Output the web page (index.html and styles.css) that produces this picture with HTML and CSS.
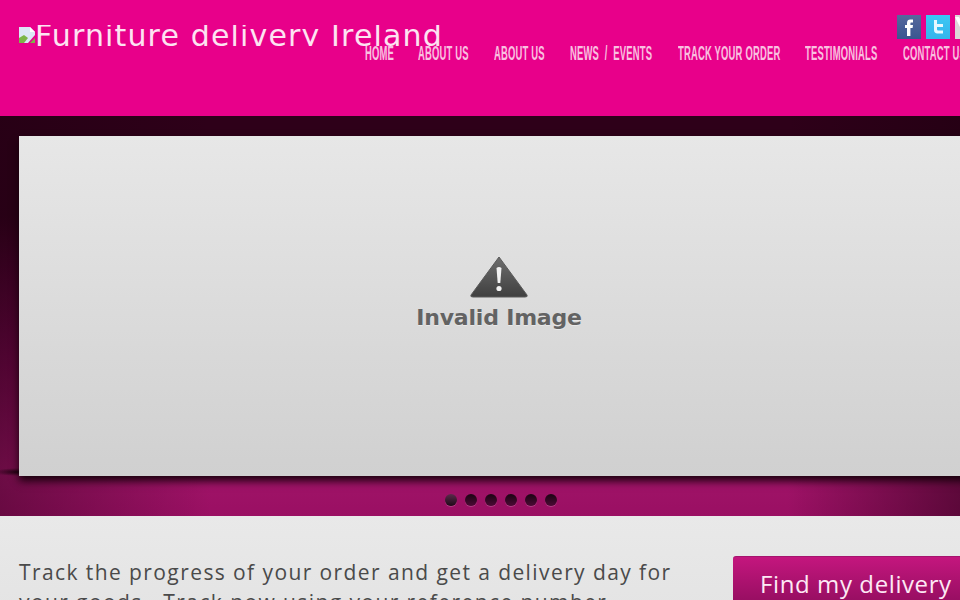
FILE: index.html
```html
<!DOCTYPE html>
<html lang="en">
<head>
  <meta charset="UTF-8">
  <title>Furniture delivery Ireland</title>
  <link rel="stylesheet" href="styles.css">
</head>
<body>
  <header class="header">
    <div class="logo">
      <div class="logo-inner">
        <svg class="broken-img" width="16" height="16" viewBox="0 0 16 16">
          <path d="M0 0h11l5 5v3L9 16H0z" fill="#dce6f6"/>
          <path d="M11 0l5 5h-5z" fill="#fff"/>
          <path d="M0 16v-5l5-3 4 3-4 5z" fill="#7cb548"/>
          <path d="M11 16l5-5v5z" fill="#7cb548"/>
        </svg>
        <span class="logo-text">Furniture delivery Ireland</span>
      </div>
    </div>
    <div class="header-right">
      <div class="social">
        <a class="social-icon fb" href="#">
          <svg width="24" height="24" viewBox="0 0 24 24"><path d="M10 21V13H8V10h2V8c0-2.500 1.300-3.500 3.300-3.500H16v3h-1.600c-.8 0-1 .4-1 1.100V10H16l-.4 3h-2.200v8z" fill="#fff"/></svg>
        </a>
        <a class="social-icon tw" href="#">
          <svg width="24" height="24" viewBox="0 0 24 24"><path d="M8 5h3v4h6v3h-6v2c0 1 .5 1.500 1.500 1.500H17v3h-5.500C9.200 18.500 8 17 8 15z" fill="#e6f8ff"/></svg>
        </a>
        <a class="social-icon yt" href="#">
          <svg width="24" height="24" viewBox="0 0 24 24"><path d="M0 2h4l4 8 4-8h4l-6 12v8H6v-8z" fill="#fff"/></svg>
        </a>
      </div>
      <nav class="nav">
        <a class="nav-link w-home" href="#"><span>HOME</span></a>
        <a class="nav-link w-about" href="#"><span>ABOUT US</span></a>
        <a class="nav-link w-about" href="#"><span>ABOUT US</span></a>
        <a class="nav-link w-news" href="#"><span>NEWS / EVENTS</span></a>
        <a class="nav-link w-track" href="#"><span>TRACK YOUR ORDER</span></a>
        <a class="nav-link w-test" href="#"><span>TESTIMONIALS</span></a>
        <a class="nav-link w-contact" href="#"><span>CONTACT US</span></a>
      </nav>
    </div>
  </header>

  <section class="hero">
    <div class="slide">
      <svg class="warn" width="58" height="42" viewBox="0 0 58 42">
        <defs>
          <linearGradient id="warnFill" x1="0" y1="0" x2="0" y2="1">
            <stop offset="0" stop-color="#6e6e6e"/>
            <stop offset="1" stop-color="#3f3f3f"/>
          </linearGradient>
        </defs>
        <path d="M29 1 L57 39 Q58 41 55 41 H3 Q0 41 1 39 Z" fill="url(#warnFill)" stroke="#5a5a5a" stroke-linejoin="round"/>
        <path d="M26.500 12 Q29 10 31.500 12 L30.300 27 H27.700 Z" fill="#f2f2f2"/>
        <circle cx="29" cy="32.500" r="2.600" fill="#f2f2f2"/>
      </svg>
      <div class="invalid">Invalid Image</div>
    </div>
    <div class="dots">
      <span class="dot active"></span>
      <span class="dot"></span>
      <span class="dot"></span>
      <span class="dot"></span>
      <span class="dot"></span>
      <span class="dot"></span>
    </div>
  </section>

  <section class="track">
    <p class="track-text">Track the progress of your order and get a delivery day for your goods.&nbsp; Track now using your reference number.</p>
    <a class="btn" href="#">Find my delivery</a>
  </section>
</body>
</html>
```

FILE: styles.css
```css
html, body {
  margin: 0;
  padding: 0;
  width: 960px;
  height: 600px;
  overflow: hidden;
}
body {
  background: #e6e6e6;
  font-family: "Open Sans", sans-serif;
}
a {
  text-decoration: none;
}

.header {
  display: flex;
  height: 116px;
  padding-left: 19px;
  background: #e8008a;
}
.logo {
  width: 346px;
  flex-shrink: 0;
}
.logo-inner {
  display: flex;
  align-items: flex-start;
  width: 430px;
  height: 21px;
  margin-top: 25px;
  overflow: hidden;
  color: #fde3f2;
  font-family: "DejaVu Sans", sans-serif;
  font-size: 30px;
  line-height: 21px;
  white-space: nowrap;
}
.broken-img {
  flex-shrink: 0;
  margin-top: 2px;
}
.logo-text {
  letter-spacing: 1.150px;
}
.header-right {
  width: 620px;
  flex-shrink: 0;
}
.social {
  display: flex;
  gap: 5px;
  padding: 15px 0 0 532px;
}
.social-icon {
  display: block;
  width: 24px;
  height: 24px;
  flex-shrink: 0;
}
.fb {
  background: linear-gradient(#56699c, #3a5590);
}
.tw {
  background: linear-gradient(#3bc8f4, #35b4ec);
}
.yt {
  background: #dcd6d8;
}
.nav {
  display: flex;
  gap: 25px;
  margin-top: 5px;
}
.nav-link {
  display: block;
  height: 18px;
  flex-shrink: 0;
  color: #f9c0e0;
  font-family: "Liberation Sans", sans-serif;
  font-size: 21px;
  font-weight: bold;
  letter-spacing: 0.4px;
  line-height: 18px;
  white-space: nowrap;
}
.nav-link span {
  display: inline-block;
  transform: scaleX(0.45);
  transform-origin: left center;
}
.w-home { width: 28px; }
.w-about { width: 51px; }
.w-news { width: 83px; word-spacing: 6.500px; }
.w-track { width: 102px; }
.w-test { width: 73px; }
.w-contact { width: 70px; }

.hero {
  height: 400px;
  box-sizing: border-box;
  padding: 20px 0 0 19px;
  background:
    radial-gradient(26px 4px at 19px 356px, rgba(20, 0, 10, 0.9), rgba(20, 0, 10, 0)),
    linear-gradient(90deg, rgba(30, 0, 16, 0.4) 0, rgba(30, 0, 16, 0) 22%, rgba(30, 0, 16, 0) 82%, rgba(30, 0, 16, 0.5) 100%),
    linear-gradient(#2e0019 0, #2e0019 25%, #6d0645 60%, #a01468 90%, #9a0f63 100%);
}
.slide {
  display: flex;
  flex-direction: column;
  align-items: center;
  width: 960px;
  height: 340px;
  box-sizing: border-box;
  padding-top: 120px;
  background: linear-gradient(#e7e7e7, #d0d0d0);
  box-shadow: 0 5px 8px rgba(20, 0, 10, 0.95);
}
.warn {
  display: block;
}
.invalid {
  margin-top: 5px;
  color: #636363;
  font-family: "DejaVu Sans", sans-serif;
  font-size: 22px;
  font-weight: bold;
  letter-spacing: -0.2px;
  line-height: 30px;
  text-shadow: 0 1px 0 #e8e8e8;
}
.dots {
  display: flex;
  gap: 8px;
  width: 964px;
  height: 40px;
  align-items: center;
  justify-content: center;
  padding-top: 8px;
  box-sizing: border-box;
}
.dot {
  width: 12px;
  height: 12px;
  border-radius: 50%;
  background: linear-gradient(#1a0412, #4c0a36);
  box-shadow: 0 1px 0 rgba(255, 255, 255, 0.2);
}
.dot.active {
  background: linear-gradient(#5a2a4a, #1e0a18);
}

.track {
  display: flex;
  align-items: flex-start;
  padding: 41px 0 0 19px;
  background: linear-gradient(#e9e9e9, #e3e3e3);
}
.track-text {
  width: 680px;
  flex-shrink: 0;
  margin: 0 34px 0 0;
  color: #4a4a4a;
  font-size: 21px;
  letter-spacing: 1.410px;
  line-height: 30px;
}
.btn {
  display: block;
  flex-shrink: 0;
  width: 260px;
  height: 70px;
  box-sizing: border-box;
  margin-top: -1px;
  padding: 9px 0 0 27px;
  border-top: 1px solid #a5146e;
  border-radius: 3px 0 0 0;
  background: linear-gradient(#c4167e, #7e0a52);
  color: #fde9f5;
  font-size: 24px;
  letter-spacing: 0.6px;
  line-height: 36px;
  white-space: nowrap;
}
```
